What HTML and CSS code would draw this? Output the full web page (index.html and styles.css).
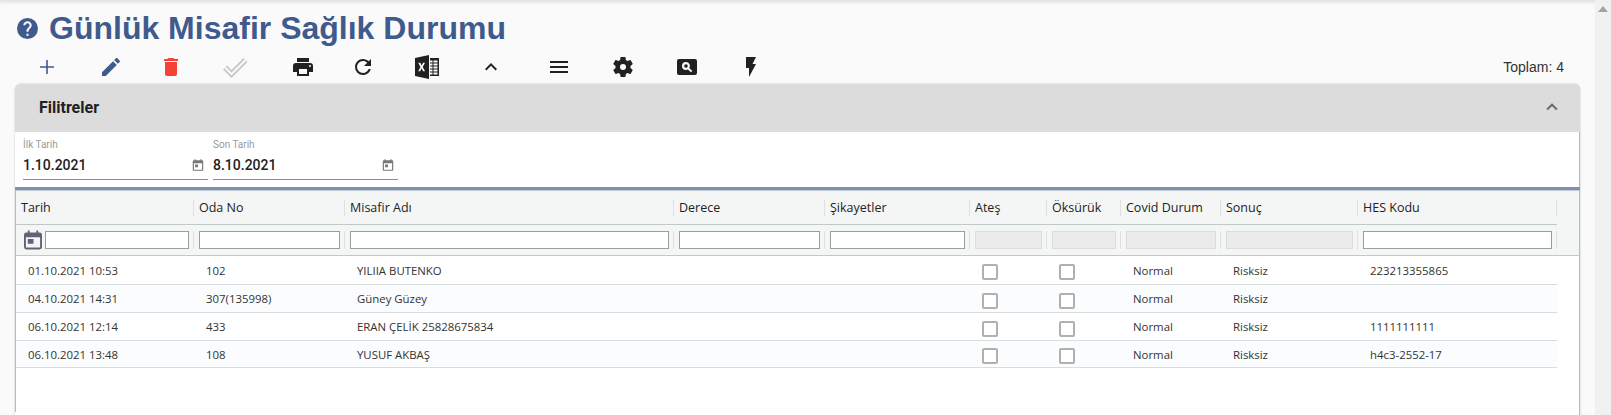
FILE: index.html
```html
<!DOCTYPE html>
<html lang="tr">
<head>
<meta charset="utf-8">
<title>Günlük Misafir Sağlık Durumu</title>
<link rel="stylesheet" href="styles.css">
</head>
<body>
<div class="frame">
  <main class="page">
    <header class="title-row">
      <svg class="help" viewBox="0 0 20 20"><path d="M10 0a10 10 0 1 0 0 20a10 10 0 0 0 0-20zM11 17H9v-2h2zM13.100 9.300l-.9.9C11.500 10.900 11 11.500 11 13H9v-.5c0-1.100.5-2.100 1.200-2.800l1.240-1.260A2 2 0 0 0 12 7a2 2 0 0 0-4 0H6a4 4 0 0 1 8 0c0 .9-.35 1.700-.9 2.300z"/></svg>
      <h1>Günlük Misafir Sağlık Durumu</h1>
    </header>
    <div class="toolbar">
      <span class="tool blue"><svg viewBox="0 0 24 24"><path d="M19 12.800h-6.200V19h-1.600v-6.200H5v-1.600h6.200V5h1.600v6.200H19z"/></svg></span>
      <span class="tool blue"><svg viewBox="0 0 24 24"><path d="M20.710 7.040C21.100 6.650 21.100 6 20.710 5.630L18.370 3.290C18 2.900 17.350 2.900 16.960 3.290L15.120 5.120L18.870 8.870M3 17.250V21H6.750L17.810 9.930L14.060 6.180L3 17.250Z"/></svg></span>
      <span class="tool red back"><svg viewBox="0 0 24 24"><path d="M19 4H15.500L14.500 3H9.500L8.500 4H5V6H19M6 19A2 2 0 0 0 8 21H16A2 2 0 0 0 18 19V7H6V19Z"/></svg></span>
      <span class="tool"><svg viewBox="0 0 24 24"><path class="ghost-out" d="M2 12.500L8.500 19L22.500 5"/><path class="ghost-in" d="M2 12.500L8.500 19L22.500 5"/></svg></span>
      <span class="tool forward"><svg viewBox="0 0 24 24"><path d="M18 3H6V7H18M19 12A1 1 0 0 1 18 11A1 1 0 0 1 19 10A1 1 0 0 1 20 11A1 1 0 0 1 19 12M16 19H8V14H16M19 8H5A3 3 0 0 0 2 11V17H6V21H18V17H22V11A3 3 0 0 0 19 8Z"/></svg></span>
      <span class="tool back"><svg viewBox="0 0 24 24"><path d="M17.650 6.350C16.200 4.900 14.210 4 12 4A8 8 0 0 0 4 12A8 8 0 0 0 12 20C15.730 20 18.840 17.450 19.730 14H17.650C16.830 16.330 14.610 18 12 18A6 6 0 0 1 6 12A6 6 0 0 1 12 6C13.660 6 15.140 6.690 16.220 7.780L13 11H20V4L17.650 6.350Z"/></svg></span>
      <span class="tool"><svg viewBox="0 0 24 24"><path fill-rule="evenodd" d="M0 3L14 0V24L0 21ZM3.200 7.800L5.500 12L3.200 16.200H5.100L6.600 13.300L8.100 16.200H10.100L7.700 12L10 7.800H8.100L6.700 10.600L5.200 7.800Z"/><path d="M15 3H24V21H15V19.500H17.500V17.500H15V16.500H17.500V14.500H15V13.500H17.500V11.500H15V10.500H17.500V8.500H15V7.500H17.500V5.500H15ZM18.500 5.500V7.500H22.500V5.500ZM18.500 8.500V10.500H22.500V8.500ZM18.500 11.500V13.500H22.500V11.500ZM18.500 14.500V16.500H22.500V14.500ZM18.500 17.500V19.500H22.500V17.500Z"/></svg></span>
      <span class="tool"><svg viewBox="0 0 24 24"><path d="M7.410 15.410L12 10.830L16.590 15.410L18 14L12 8L6 14Z"/></svg></span>
      <span class="tool forward"><svg viewBox="0 0 24 24"><path d="M3 6H21V8H3V6M3 11H21V13H3V11M3 16H21V18H3V16Z"/></svg></span>
      <span class="tool"><svg viewBox="0 0 24 24"><path fill-rule="evenodd" d="M12 15a3 3 0 1 1 0-6a3 3 0 0 1 0 6M19.430 12.970C19.470 12.650 19.500 12.330 19.500 12C19.500 11.670 19.470 11.340 19.430 11L21.540 9.370C21.730 9.220 21.780 8.950 21.660 8.730L19.660 5.270C19.540 5.050 19.270 4.960 19.050 5.050L16.560 6.050C16.040 5.660 15.500 5.320 14.870 5.070L14.500 2.420C14.460 2.180 14.250 2 14 2H10C9.750 2 9.540 2.180 9.500 2.420L9.130 5.070C8.500 5.320 7.960 5.660 7.440 6.050L4.950 5.050C4.730 4.960 4.460 5.050 4.340 5.270L2.340 8.730C2.210 8.950 2.270 9.220 2.460 9.370L4.570 11C4.530 11.340 4.500 11.670 4.500 12C4.500 12.330 4.530 12.650 4.570 12.970L2.460 14.630C2.270 14.780 2.210 15.050 2.340 15.270L4.340 18.730C4.460 18.950 4.730 19.030 4.950 18.950L7.440 17.940C7.960 18.340 8.500 18.680 9.130 18.930L9.500 21.580C9.540 21.820 9.750 22 10 22H14C14.250 22 14.460 21.820 14.500 21.580L14.870 18.930C15.500 18.670 16.040 18.340 16.560 17.940L19.050 18.950C19.270 19.030 19.540 18.950 19.660 18.730L21.660 15.270C21.780 15.050 21.730 14.780 21.540 14.630L19.430 12.970Z"/></svg></span>
      <span class="tool"><svg viewBox="0 0 24 24"><path fill-rule="evenodd" d="M4 4H20A2 2 0 0 1 22 6V18A2 2 0 0 1 20 20H4A2 2 0 0 1 2 18V6A2 2 0 0 1 4 4ZM11 7A4 4 0 1 0 11 15A4 4 0 0 0 12.900 14.500L16 17.300L17.300 15.900L14.300 13.100A4 4 0 0 0 11 7ZM11 9.200A1.800 1.800 0 1 1 11 12.800A1.800 1.800 0 0 1 11 9.200Z"/></svg></span>
      <span class="tool"><svg viewBox="0 0 24 24"><path d="M7 2H17L13.500 9H17L10 22V13H7Z"/></svg></span>
      <span class="total">Toplam: 4</span>
    </div>
    <section class="panel">
      <div class="panel-head">
        <h2>Filitreler</h2>
        <svg viewBox="0 0 24 24"><path d="M7.410 15.410L12 10.830L16.590 15.410L18 14L12 8L6 14Z"/></svg>
      </div>
      <div class="filters">
        <label class="date-field">
          <span class="date-label">İlk Tarih</span>
          <span class="date-value">1.10.2021<svg viewBox="0 0 24 24"><path d="M19 4h-1V2h-2v2H8V2H6v2H5a2 2 0 0 0-2 2v14a2 2 0 0 0 2 2h14a2 2 0 0 0 2-2V6a2 2 0 0 0-2-2zm0 16H5V9h14zM7 11h5v5H7z"/></svg></span>
        </label>
        <label class="date-field">
          <span class="date-label">Son Tarih</span>
          <span class="date-value">8.10.2021<svg viewBox="0 0 24 24"><path d="M19 4h-1V2h-2v2H8V2H6v2H5a2 2 0 0 0-2 2v14a2 2 0 0 0 2 2h14a2 2 0 0 0 2-2V6a2 2 0 0 0-2-2zm0 16H5V9h14zM7 11h5v5H7z"/></svg></span>
        </label>
      </div>
      <div class="grid-wrap">
        <div class="grid-line head-row">
          <div>Tarih</div><div>Oda No</div><div>Misafir Adı</div><div>Derece</div><div>Şikayetler</div><div>Ateş</div><div>Öksürük</div><div>Covid Durum</div><div>Sonuç</div><div>HES Kodu</div>
        </div>
        <div class="filter-band">
          <div class="grid-line filter-row">
            <div class="with-icon"><svg viewBox="0 0 19 20"><path d="M16.500 2H15V0H13V2H6V0H4V2H2.500A2.500 2.500 0 0 0 0 4.500V17.500A2.500 2.500 0 0 0 2.500 20H16.500A2.500 2.500 0 0 0 19 17.500V4.500A2.500 2.500 0 0 0 16.500 2ZM17 18H2V7H17ZM4 9H10V14H4Z"/></svg><input type="text"></div>
            <div><input type="text"></div><div><input type="text"></div><div><input type="text"></div><div><input type="text"></div>
            <div><input type="text" disabled></div><div><input type="text" disabled></div><div><input type="text" disabled></div><div><input type="text" disabled></div>
            <div><input type="text"></div>
          </div>
        </div>
        <div class="grid-line data-row tall">
          <div>01.10.2021 10:53</div><div>102</div><div>YILIIA BUTENKO</div><div></div><div></div><div class="check-cell"><input type="checkbox" disabled></div><div class="check-cell"><input type="checkbox" disabled></div><div>Normal</div><div>Risksiz</div><div>223213355865</div>
        </div>
        <div class="grid-line data-row alt">
          <div>04.10.2021 14:31</div><div>307(135998)</div><div>Güney Güzey</div><div></div><div></div><div class="check-cell"><input type="checkbox" disabled></div><div class="check-cell"><input type="checkbox" disabled></div><div>Normal</div><div>Risksiz</div><div></div>
        </div>
        <div class="grid-line data-row">
          <div>06.10.2021 12:14</div><div>433</div><div>ERAN ÇELİK 25828675834</div><div></div><div></div><div class="check-cell"><input type="checkbox" disabled></div><div class="check-cell"><input type="checkbox" disabled></div><div>Normal</div><div>Risksiz</div><div>1111111111</div>
        </div>
        <div class="grid-line data-row alt short">
          <div>06.10.2021 13:48</div><div>108</div><div>YUSUF AKBAŞ</div><div></div><div></div><div class="check-cell"><input type="checkbox" disabled></div><div class="check-cell"><input type="checkbox" disabled></div><div>Normal</div><div>Risksiz</div><div>h4c3-2552-17</div>
        </div>
      </div>
    </section>
  </main>
  <aside class="scrollbar"><span class="scroll-up"></span></aside>
</div>
</body>
</html>
```
FILE: styles.css
```css
* { box-sizing: border-box; }
html, body { margin: 0; height: 100%; overflow: hidden; }
body { background: #fafafa; font-family: "Liberation Sans", Arial, sans-serif; color: #212121; }
.frame { display: flex; height: 415px; }
.page { width: 1595px; height: 415px; padding: 0 15px; overflow: hidden; box-shadow: inset 0 5px 4px -3px #ddd; }

.title-row { display: flex; align-items: center; height: 53px; padding: 3px 0 0 2px; }
.help { width: 21px; height: 21px; fill: #3f5b8e; margin-right: 11px; }
h1 { margin: 0; font-size: 32px; line-height: 36px; font-weight: 700; color: #3f5b8e; }

.toolbar { display: flex; align-items: center; height: 31px; padding-bottom: 4px; }
.tool { width: 64px; height: 24px; display: flex; justify-content: center; fill: #212121; }
.tool svg { width: 24px; height: 24px; display: block; }
.tool.blue { fill: #3f5b8e; }
.tool.red { fill: #f44336; }
.tool.back { margin-left: -4px; }
.tool.forward { margin-left: 4px; }
.ghost-out { fill: none; stroke: #c6c6c6; stroke-width: 5.500; }
.ghost-in { fill: none; stroke: #fafafa; stroke-width: 2; }
.total { margin-left: auto; margin-right: 16px; font-size: 14px; line-height: 18px; color: #333; }

.panel { height: 340px; background: #fff; border-radius: 6px 6px 0 0; border-right: 1px solid #bbb; box-shadow: 0 0 2px #bbb; }
.panel-head { height: 48px; background: #dcdcdc; border-radius: 6px 6px 0 0; display: flex; align-items: center; justify-content: space-between; padding: 0 17px 2px 24px; margin-right: -1px; }
h2 { margin: 0; font-size: 16px; font-weight: 700; font-family: Roboto, sans-serif; color: #212121; }
.panel-head svg { width: 22px; height: 22px; fill: #666; }

.filters { height: 58px; display: flex; gap: 5px; padding: 7px 0 0 8px; border-bottom: 3px solid #7f8fb8; margin-right: -1px; }
.date-field { width: 185px; height: 41px; display: block; border-bottom: 1px solid #8a8a8a; }
.date-label { display: block; font-size: 10px; line-height: 12px; color: #9a9a9a; font-family: Roboto, sans-serif; }
.date-value { display: flex; justify-content: space-between; align-items: center; padding: 1px 3px 0 0; font-size: 14px; line-height: 26px; font-weight: 500; font-family: Roboto, sans-serif; color: #212121; }
.date-value svg { width: 14px; height: 14px; fill: #777; }

.grid-wrap { border-left: 1px solid #bbb; border-top: 1px solid #c4cccc; height: 222px; font-family: "Open Sans", sans-serif; }
.grid-line { display: grid; grid-template-columns: 178px 151px 329px 151px 145px 77px 74px 100px 137px 199px; width: 1541px; }
.head-row { height: 34px; background: #f4f6f6; border-bottom: 1px solid #c0c8c8; font-size: 12.500px; color: #222; align-items: center; box-shadow: 22px 0 0 #f4f6f6; }
.head-row > div { height: 16px; line-height: 16px; padding-left: 5px; border-right: 1px solid #dde1e1; }
.filter-band { height: 31px; background: #f4f6f6; border-bottom: 1px solid #c0c8c8; }
.filter-row { height: 30px; align-items: center; }
.filter-row > div { height: 18px; padding: 0 4px 0 5px; border-right: 1px solid #dde1e1; display: flex; align-items: center; }
.filter-row input { flex: 1; min-width: 0; width: 100%; height: 18px; padding: 0; border: 1px solid #92a0a0; background: #fff; border-radius: 0; }
.filter-row input:disabled { background: #ebebeb; border-color: #dcdcdc; }
.filter-row .with-icon { padding-left: 8px; gap: 3px; }
.with-icon svg { width: 18px; height: 20px; flex: none; fill: #5d6478; }

.data-row { height: 28px; border-bottom: 1px solid #d8dde0; font-size: 11.400px; color: #333; align-items: center; background: #fff; }
.data-row.tall { height: 29px; }
.data-row.short { height: 27px; }
.data-row > div { padding-left: 12px; }
.data-row.alt { background: #fbfcfe; }
.data-row .check-cell { display: flex; align-items: center; padding-top: 4px; }
.check-cell input { appearance: none; margin: 0; width: 16px; height: 16px; border: 2px solid #b0b0b0; border-radius: 2px; background: #fff; }

.scrollbar { width: 16px; height: 415px; background: #f1f1f1; }
.scroll-up { display: block; width: 0; height: 0; margin: 6px auto 0; border-left: 5px solid transparent; border-right: 5px solid transparent; border-bottom: 6px solid #a3a3a3; }
```
